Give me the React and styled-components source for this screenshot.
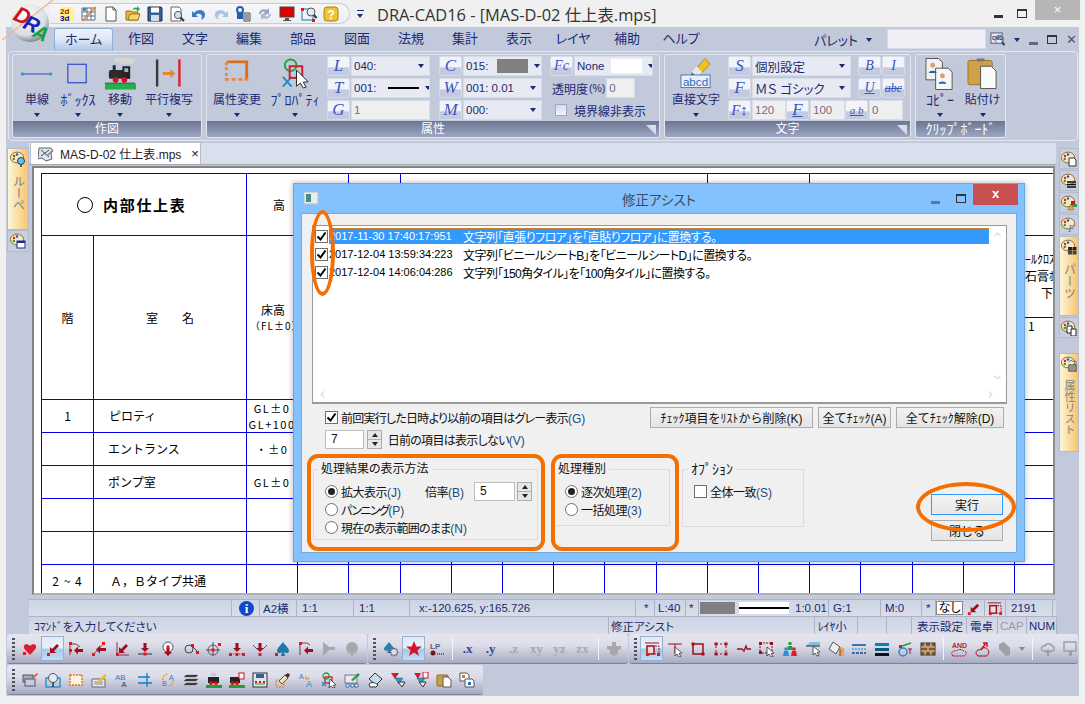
import React from "react";
import styled, { createGlobalStyle } from "styled-components";
import { ChevronLeft, ChevronRight, ChevronUp, ChevronDown } from "lucide-react";

const FONT = `"Liberation Sans", "Noto Sans CJK JP", sans-serif`;
const NAVY = "#1c2a70";
const BLUE_LINE = "#0000e8";
const ORANGE = "#f56f00";

const GlobalStyle = createGlobalStyle`
  html, body { margin: 0; padding: 0; background: #f0f0f0; }
  body { width: 1085px; height: 704px; overflow: hidden; font-family: ${FONT}; font-size: 12px; color: #111; font-feature-settings: "palt"; }
  * { box-sizing: border-box; }
`;

/* ---------- icons ---------- */

const Red = "#a10d1c";
const arrowDL = <path d="M13 3L8 8l-2-2v6h6l-2-2 5-5z" fill={Red} transform="translate(-1 0)" />;
const arrowD = <path d="M6.5 2h3v5H12l-4 4-4-4h2.5z" fill={Red} />;
const dot = (x, y, c = "#e8141e") => <rect x={x} y={y} width="3" height="3" fill={c} />;
const palette = (
  <>
    <ellipse cx="7" cy="6.5" rx="6.6" ry="5.4" fill="#f6e9bf" stroke="#8d6a36" />
    <circle cx="4" cy="5" r="1.2" fill="#e02020" />
    <circle cx="7" cy="3.5" r="1.2" fill="#2050d0" />
    <circle cx="3.8" cy="8" r="1.2" fill="#20a040" />
  </>
);

const ICONS = {
  twoD: (
    <>
      <rect x="1" y="1" width="14" height="14" fill="#fff48a" />
      <text x="1" y="7.5" fontSize="8" fontWeight="700" fill="#c80000" fontFamily="Liberation Sans">2d</text>
      <text x="1" y="15" fontSize="8" fontWeight="700" fill="#0000a0" fontFamily="Liberation Sans">3d</text>
    </>
  ),
  layout: (
    <>
      <path d="M1 2h13v12H1z" fill="#fff" stroke="#57708c" />
      <path d="M1 6h13M1 10h13M6 2v12M10 2v12" stroke="#57708c" />
      <path d="M2 2h3v3H2z" fill="#3f8f8a" />
      <path d="M1 15L15 1" stroke="#e87a20" strokeWidth="1.3" />
    </>
  ),
  newDoc: <path d="M3 1h7l3 3v11H3z M10 1v3h3" fill="#fff" stroke="#555" />,
  open: (
    <>
      <path d="M1 5h5l1 1h6v8H1z" fill="#e9b93d" stroke="#9a7416" />
      <path d="M3 14l2-6h10l-2 6z" fill="#f7d86a" stroke="#9a7416" />
      <path d="M7 4c2-3 4-3 5-2V0l3 3-3 3V4c-1-1-3-1-5 0z" fill="#3aa53a" />
    </>
  ),
  save: (
    <>
      <path d="M1 1h13l1 1v13H1z" fill="#39618f" stroke="#1c2f50" />
      <rect x="4" y="1.5" width="8" height="5" fill="#fff" />
      <rect x="4" y="9" width="8" height="6" fill="#d5dce6" />
    </>
  ),
  preview: (
    <>
      <path d="M2 1h8l2 2v12H2z" fill="#fff" stroke="#666" />
      <circle cx="9" cy="9" r="3.6" fill="#cfe4f8" stroke="#555" />
      <path d="M11.5 11.5l3.5 3.5" stroke="#333" strokeWidth="2" />
    </>
  ),
  undo: <path d="M3 7c3-4 10-4 11 1 .5 3-2 5-4 6 1-2 1.500-5-1-6-2-.7-3 0-4 1l2 2H1V5z" fill="#3a79c8" />,
  redo: <path d="M13 7c-3-4-10-4-11 1-.5 3 2 5 4 6-1-2-1.500-5 1-6 2-.7 3 0 4 1l-2 2h6V5z" fill="#a5c4e6" />,
  lockList: (
    <>
      <circle cx="5" cy="4" r="3" fill="none" stroke="#1f5fb0" strokeWidth="2" />
      <rect x="2" y="7" width="6" height="6" fill="#1f5fb0" />
      <path d="M9 7h6v8H9z" fill="#fff" stroke="#444" />
      <path d="M10 9h4M10 11h4M10 13h4" stroke="#333" />
    </>
  ),
  refresh: (
    <>
      <path d="M2 8c0-4 5-6 8-4l2-2v6H6l2-2c-2-1-4 0-4 2z" fill="#8fa5c4" />
      <path d="M14 8c0 4-5 6-8 4l-2 2V8h6l-2 2c2 1 4 0 4-2z" fill="#a9bcd6" />
    </>
  ),
  monitor: (
    <>
      <rect x="1" y="1" width="14" height="10" fill="#e00000" stroke="#444" />
      <path d="M6 12h4v2h2v1H4v-1h2z" fill="#555" />
    </>
  ),
  frameZoom: (
    <>
      <rect x="1" y="3" width="11" height="11" fill="none" stroke="#0a7fb8" />
      <circle cx="10" cy="6" r="4" fill="#d8ecfa" stroke="#555" />
      <path d="M13 9l2.500 3" stroke="#333" strokeWidth="2" />
      {dot(0, 2)}
      {dot(11, 13)}
    </>
  ),
  help: (
    <>
      <rect x="1" y="1" width="14" height="14" rx="3" fill="#f2c230" stroke="#a98214" />
      <text x="4.5" y="13" fontSize="12" fontWeight="700" fill="#fff" fontFamily="Liberation Sans">?</text>
    </>
  ),
  search: (
    <>
      <rect x="1" y="1" width="12" height="11" fill="#e8e8f4" stroke="#556" />
      <text x="2" y="8" fontSize="5" fontWeight="700" fill="#223" fontFamily="Liberation Sans">CMD</text>
      <circle cx="10" cy="8" r="4.5" fill="none" stroke="#6a8ac0" strokeWidth="1.300" />
      <path d="M13 11l2.500 3" stroke="#333" strokeWidth="2" />
    </>
  ),
  doc: (
    <>
      <path d="M1 2h12l2 3-2 2 1 6-6 2-4-3-4 1z" fill="#dde4ee" stroke="#666" />
      <path d="M3 4l8 7M3 10l8-6" stroke="#446" />
      <path d="M9 9l5-5 1 1-5 5z" fill="#888" />
    </>
  ),
  dlg: (
    <>
      <rect x="1" y="1" width="14" height="12" fill="#e8eef0" stroke="#bbb" />
      <rect x="3" y="3" width="5" height="8" fill="#3f8f8a" />
    </>
  ),
  heart: (
    <>
      <path d="M8 14L2.500 8C0 4 5 1.500 8 5c3-3.500 8-1 5.500 3z" fill="#dd1c2c" />
      {dot(1, 11)}
    </>
  ),
  snapNear: <>{arrowDL}{dot(2, 12)}</>,
  snapTrace: (
    <>
      <path d="M2 2v12M2 3h6l4 3" fill="none" stroke="#8c3040" />
      {dot(1, 1)}{dot(1, 8)}
      <path d="M15 8v3H10v2.500L6 9.500l4-4V8z" fill={Red} />
    </>
  ),
  snapDiag: (
    <>
      <path d="M2 14L13 2" stroke="#8c3040" />
      {dot(11, 1)}{dot(1, 12)}
      <path d="M15 7v3H9v2.500L5 8.500l4-4V7z" fill={Red} />
    </>
  ),
  snapCorner: (
    <>
      <path d="M3 1v13h12" fill="none" stroke="#8c3040" />
      {dot(2, 12)}
      {arrowDL}
    </>
  ),
  snapBase: (
    <>
      <path d="M1 13h14" stroke="#333" />
      {arrowD}
      {dot(6.500, 11.500)}
    </>
  ),
  snapCircle: (
    <>
      <circle cx="8" cy="6" r="5" fill="#fff" stroke="#555" />
      <path d="M6.500 7h3v4H12l-4 4-4-4h2.500z" fill={Red} />
      {dot(6.500, 4.500)}
    </>
  ),
  snapTangent: (
    <>
      <circle cx="6" cy="8" r="4" fill="none" stroke="#444" />
      <path d="M9 5l6 6" stroke="#444" />
      {dot(8, 3)}{dot(13, 10)}
    </>
  ),
  snapCross: (
    <>
      <circle cx="7" cy="9" r="5" fill="none" stroke="#555" />
      <path d="M7 1v14M0 9h14" stroke="#555" />
      {dot(12, 2)}{dot(5.500, 7.500)}
    </>
  ),
  snapThree: (
    <>
      {arrowD}
      <path d="M2 13h12" stroke="#555" strokeDasharray="1 1" />
      {dot(0, 12)}{dot(6.500, 12)}{dot(13, 12)}
    </>
  ),
  snapFan: (
    <>
      {arrowD}
      <path d="M1 4l4 4M15 4l-4 4" stroke="#555" />
      {dot(6.500, 12)}
    </>
  ),
  spade: (
    <>
      <path d="M8 1c3 4 6 6 6 9 0 2-3 3-5 1l1 4H6l1-4c-2 2-5 1-5-1 0-3 3-5 6-9z" fill="#1f7aa8" />
      {dot(0, 12)}
    </>
  ),
  snapFlag: (
    <>
      <path d="M2 14V2h7l3 2" fill="none" stroke="#8c3040" />
      {dot(1, 1)}
      <path d="M15 8v3H10v2.500L6 9.500l4-4V8z" fill={Red} />
    </>
  ),
  grayFlag: <path d="M2 1l6 5h6v3H8l-6 6z" fill="#a8a8ac" />,
  grayBall: (
    <>
      <circle cx="8" cy="7" r="6" fill="#a8a8ac" />
      <rect x="7" y="12" width="2" height="3" fill="#a8a8ac" />
    </>
  ),
  spadeGear: (
    <>
      <path d="M6 1c2 3 5 5 5 7 0 2-3 2-4 1l1 3H4l1-3C4 10 1 10 1 8c0-2 3-4 5-7z" fill="#2a7fb0" />
      <circle cx="11" cy="11" r="3.500" fill="#dde" stroke="#556" strokeWidth="1.500" strokeDasharray="1.500 .8" />
    </>
  ),
  star: <path d="M8 0l2.200 5.500H16l-4.600 3.700L13 15l-5-3.400L3 15l1.600-5.800L0 5.500h5.800z" fill="#d4132a" />,
  lp: (
    <>
      <text x="1" y="8" fontSize="8" fontWeight="700" fill="#5a5f78" fontFamily="Liberation Sans">LP</text>
      <circle cx="4" cy="12" r="2.500" fill="#7a1020" />
      <path d="M8 13h7" stroke="#667" strokeWidth="2" strokeDasharray="1 1" />
    </>
  ),
  plusGray: <path d="M6 1h4v4h5v3l-3 1v4l-4 2-4-2V9L1 8V5h5z" fill="#a8a8ac" />,
  trim: (
    <>
      <path d="M1 2h14" stroke={Red} />
      <rect x="3" y="5" width="7" height="8" fill="#f4dada" stroke={Red} strokeWidth="1.500" />
      <path d="M11 5h4v8h-4" fill="none" stroke={Red} strokeDasharray="2 1" />
      {dot(2, 12)}{dot(13, 12)}
    </>
  ),
  lineCursor: (
    <>
      <path d="M1 3h14M8 3v9" stroke={Red} />
      <path d="M8 6l7 6-3 .5 2 3-2 .5-2-3-2 2z" fill="#fff" stroke="#333" strokeWidth=".8" />
    </>
  ),
  square: (
    <>
      <rect x="3" y="3" width="10" height="10" fill="none" stroke={Red} strokeWidth="1.500" />
      {dot(1.500, 1.500, Red)}{dot(11.500, 11.500, Red)}
    </>
  ),
  dashSquare: (
    <>
      <rect x="3" y="3" width="10" height="10" fill="none" stroke={Red} strokeDasharray="2 2" />
      {dot(1.500, 1.500, Red)}{dot(11.500, 1.500, Red)}{dot(1.500, 11.500, Red)}{dot(11.500, 11.500, Red)}
    </>
  ),
  wave: <path d="M1 8h5l2 2 2-5 1 3h4" fill="none" stroke={Red} strokeWidth="1.300" />,
  dashCursor: (
    <>
      <rect x="1" y="2" width="12" height="10" fill="none" stroke={Red} strokeDasharray="2 1" />
      {dot(0, 1, Red)}{dot(11, 1, Red)}{dot(0, 10, Red)}
      <path d="M8 6l7 6-3 .5 2 3-2 .5-2-3-2 2z" fill="#fff" stroke="#333" strokeWidth=".8" />
    </>
  ),
  people: (
    <>
      <circle cx="8" cy="2.500" r="1.800" fill="#22a040" />
      <path d="M6 5h4l1 4H5z" fill="#22a040" />
      <circle cx="4" cy="8" r="1.800" fill="#2a8fd8" />
      <path d="M2 10h4l1 5H1z" fill="#2a8fd8" />
      <circle cx="12" cy="8" r="1.800" fill="#d82030" />
      <path d="M10 10h4l1 5H9z" fill="#d82030" />
    </>
  ),
  blueCursor: (
    <>
      <path d="M1 5L5 1h10v4z" fill="#7fc3e0" />
      <path d="M1 5h14" stroke="#333" />
      <path d="M8 5l7 6-3 .5 2 3-2 .5-2-3-2 2z" fill="#fff" stroke="#333" strokeWidth=".8" />
    </>
  ),
  eraser: (
    <>
      <path d="M5 1l7 5-4 7-7-5z" fill="#eee" stroke="#555" />
      <path d="M13 6v9M15 7v8" stroke="#d8a020" strokeWidth="1.500" />
      <path d="M12 8v7" stroke="#c02020" />
    </>
  ),
  dashLines: (
    <>
      <path d="M1 4h14" stroke="#0c4f9a" strokeWidth="1.500" />
      <path d="M1 8h14" stroke="#0c8fb8" strokeDasharray="2 1" />
      <path d="M1 12h14" stroke="#0c4f9a" strokeDasharray="3 1" strokeWidth="1.500" />
    </>
  ),
  thickLines: (
    <>
      <rect x="1" y="2" width="14" height="3" fill="#0a7fc0" />
      <rect x="1" y="7" width="14" height="3" fill="#0a5a8c" />
      <rect x="1" y="12" width="14" height="3" fill="#111" />
    </>
  ),
  tilted: (
    <>
      <circle cx="6" cy="11" r="4" fill="none" stroke="#1f8ad0" strokeWidth="1.500" />
      <path d="M2 6l12-4" stroke="#22a040" strokeWidth="1.500" />
      <path d="M11 8h4M13 8v5" stroke={Red} />
      {dot(2, 4)}
    </>
  ),
  hatch: (
    <>
      <rect x="1" y="2" width="14" height="12" fill="#8a5a2c" stroke="#333" />
      <path d="M1 6h14M1 10h14M5 2v4M11 2v4M8 6v4M5 10v4M11 10v4" stroke="#e0d0b0" />
    </>
  ),
  andCloud: (
    <>
      <text x="1" y="7" fontSize="7" fontWeight="700" fill="#c02030" fontFamily="Liberation Sans">AND</text>
      <path d="M2 15c-3-3 0-6 3-5 2-2 6-2 8 0 3 0 3 4 0 5z" fill="none" stroke={Red} strokeDasharray="2 1" />
    </>
  ),
  cloudArrow: (
    <>
      <path d="M4 15c-4-3-1-7 2-6 1-3 7-3 8 0 2 2 0 6-2 6z" fill="none" stroke={Red} />
      <path d="M7 9l5-7M9 2h4v4" fill="none" stroke="#d81028" strokeWidth="1.500" />
    </>
  ),
  grayPaint: <path d="M2 3l5-2 6 6v7l-4 1-7-7z" fill="#a0a0a4" />,
  grayCloud: (
    <>
      <path d="M3 10C0 8 2 4 5 5c1-3 6-3 7 0 3 0 3 5 0 5z" fill="none" stroke="#a0a0a4" strokeWidth="1.500" />
      <path d="M8 8l-3 4h2v3h2v-3h2z" fill="#a0a0a4" />
    </>
  ),
  grayBox: (
    <>
      <rect x="1" y="1" width="12" height="9" fill="none" stroke="#a0a0a4" strokeWidth="1.500" />
      <path d="M6 10h3v5H6z" fill="#a0a0a4" />
    </>
  ),
  chat: (
    <>
      <rect x="1" y="3" width="10" height="7" fill="#aab" stroke="#556" />
      <rect x="3" y="7" width="10" height="7" fill="#c8cce0" stroke="#556" />
      <path d="M11 5l4-4 1 1-4 4z" fill="#e04020" />
    </>
  ),
  zoomFrame: (
    <>
      <rect x="1" y="6" width="14" height="9" fill="none" stroke="#1a8ad0" strokeWidth="1.300" />
      <circle cx="8" cy="6" r="4.500" fill="#d8ecfa" stroke="#555" />
      <path d="M8 10.500V15" stroke="#333" strokeWidth="1.500" />
    </>
  ),
  dashRect: <rect x="2" y="3" width="12" height="10" fill="#fff3e6" stroke="#e07a20" strokeWidth="1.500" strokeDasharray="2 1" />,
  penBox: (
    <>
      <path d="M1 7h13v8H1z" fill="#e8e8ee" stroke="#667" />
      <path d="M3 10h9M3 12h9" stroke="#889" />
      <path d="M6 10l8-8 2 2-8 7z" fill="#f0c020" />
    </>
  ),
  abReplace: (
    <>
      <text x="1" y="8" fontSize="8" fill="#2a7fc0" fontFamily="Liberation Sans">AB</text>
      <text x="7" y="15" fontSize="8" fontWeight="700" fill="#667" fontFamily="Liberation Sans">A</text>
    </>
  ),
  crossLine: <path d="M1 5h12M1 11h14M10 1v14" fill="none" stroke="#0a7fc8" strokeWidth="1.300" />,
  abCycle: (
    <>
      <path d="M3 8a5 5 0 0 1 5-6M13 8a5 5 0 0 1-5 6" fill="none" stroke="#e8a030" strokeWidth="1.500" strokeDasharray="2 1" />
      <text x="9" y="8" fontSize="7" fill="#2a7fc0" fontFamily="Liberation Sans">A</text>
      <text x="2" y="14" fontSize="7" fill="#2a7fc0" fontFamily="Liberation Sans">B</text>
    </>
  ),
  layers: <path d="M3 3h12l-2 2H1zM3 7h12l-2 2H1zM3 11h12l-2 2H1z" fill="#333" stroke="#666" strokeWidth=".4" />,
  train: (
    <>
      <path d="M5 1h5v3H5z" fill="#c8c8c8" />
      <rect x="2" y="5" width="11" height="6" fill="#222" />
      <circle cx="5" cy="11" r="2" fill="#d01020" />
      <circle cx="10" cy="11" r="2" fill="#d01020" />
      <rect x="0" y="13" width="16" height="3" fill="#1fa030" />
    </>
  ),
  trainD: (
    <>
      <rect x="1" y="5" width="10" height="6" fill="#222" />
      <circle cx="3.500" cy="11" r="2" fill="#d01020" />
      <circle cx="8" cy="11" r="2" fill="#d01020" />
      <rect x="0" y="13" width="16" height="3" fill="#1fa030" />
      <rect x="10" y="1" width="5" height="6" fill="#fff" stroke="#d01020" />
    </>
  ),
  floppy: (
    <>
      <rect x="1" y="1" width="14" height="14" fill="#dfe6ee" stroke="#333" />
      <rect x="4" y="2" width="8" height="4" fill="#39618f" />
      <path d="M3 9h2v2H3zM7 9h2v2H7zM11 9h2v2h-2z" fill="#d01020" />
      <path d="M3 12h10" stroke="#1fa030" />
    </>
  ),
  brush: (
    <>
      <rect x="1" y="8" width="8" height="7" fill="none" stroke="#e07a20" strokeDasharray="2 1" />
      <path d="M4 9l6-6 3 3-6 6z" fill="#f0e0b0" stroke="#555" />
      <path d="M10 3l3-2 2 2-2 3z" fill="#333" />
    </>
  ),
  aReplace: (
    <>
      <text x="1" y="7" fontSize="7" fill="#2a7fc0" fontFamily="Liberation Sans">A</text>
      <text x="8" y="15" fontSize="9" fill="#2a7fc0" fontFamily="Liberation Sans">A</text>
      <path d="M7 3l2 3 3-1-2 3-3-1z" fill="#e8a030" />
    </>
  ),
  propCursor: (
    <>
      <circle cx="5" cy="4" r="3" fill="none" stroke="#2aa040" strokeWidth="1.300" />
      <rect x="4" y="5" width="7" height="6" fill="none" stroke="#c82030" strokeWidth="1.300" />
      <path d="M1 10l4 4M5 10l-4 4" stroke="#1f8ad0" strokeWidth="1.300" />
      <path d="M9 7l6 6-3 .5 2 2-2 .5-2-2-2 2z" fill="#fff" stroke="#333" strokeWidth=".8" />
    </>
  ),
  boxPen: (
    <>
      <rect x="1" y="3" width="12" height="8" fill="#e8e8ee" stroke="#778" />
      <path d="M7 8l7-7 2 2-7 6z" fill="#2aa040" />
      <path d="M2 12h3v3H2zM7 12h3v3H7zM11 12h3v3h-3z" fill="#fff" stroke="#1f4f9a" strokeWidth=".8" />
    </>
  ),
  inkBottle: (
    <>
      <path d="M8 1l7 6-6 6-7-6z" fill="#bfe0f0" stroke="#333" />
      <path d="M2 12c2-2 6-2 9 1l-2 2H3z" fill="#fff" stroke="#333" />
    </>
  ),
  flagSwap: (
    <>
      <path d="M1 1h8l-4 6z" fill="#d81c2c" />
      <path d="M5 6h8l-4 6z" fill="#20a0d0" stroke="#333" strokeWidth=".4" />
      <path d="M8 10h7l-3 5z" fill="#eee" stroke="#333" />
    </>
  ),
  flagSwapD: (
    <>
      <path d="M1 1h7l-3 6z" fill="#d81c2c" />
      <path d="M4 6h8l-4 6z" fill="#20a0d0" stroke="#333" strokeWidth=".4" />
      <path d="M6 10h7l-3 5z" fill="#eee" stroke="#333" />
      <rect x="10" y="0" width="5" height="6" fill="#fff" stroke="#d01020" />
    </>
  ),
  pasteDoc: (
    <>
      <rect x="1" y="3" width="11" height="11" rx="1" fill="#c9a04a" stroke="#8a6a20" />
      <path d="M7 5h5l3 3v7H7z" fill="#fff" stroke="#555" />
    </>
  ),
  copyDoc: (
    <>
      <path d="M1 1h7l2 2v6H1z" fill="#fff" stroke="#555" />
      <path d="M6 7h7l2 2v6H6z" fill="#fff" stroke="#555" />
      {dot(3, 3, "#d08020")}
      {dot(9, 10, "#1f6fc0")}
    </>
  ),
  palLoupe: (
    <>
      {palette}
      <circle cx="11" cy="10" r="3.500" fill="#5cc4f0" stroke="#335" />
      <path d="M11 13.500V16" stroke="#335" strokeWidth="1.500" />
    </>
  ),
  palWin: (
    <>
      {palette}
      <rect x="7" y="8" width="8" height="7" fill="#fff" stroke="#1a2a9a" />
      <rect x="7" y="8" width="8" height="2" fill="#1a2a9a" />
    </>
  ),
  palDoc: (
    <>
      {palette}
      <path d="M8 7h5l2 2v6H8z" fill="#fff" stroke="#333" />
    </>
  ),
  palLines: (
    <>
      {palette}
      <path d="M6 9h9M6 11.500h9M6 14h9" stroke="#111" strokeWidth="1.300" />
    </>
  ),
  palShape: (
    <>
      {palette}
      <path d="M7 15l3-6 3 6z" fill="#e8b020" stroke="#555" strokeWidth=".5" />
      <rect x="10" y="6" width="4" height="4" fill="#d01020" />
      <rect x="12" y="9" width="4" height="3" fill="#20a040" />
    </>
  ),
  palF: (
    <>
      {palette}
      <text x="7" y="15" fontSize="11" fontStyle="italic" fill="#5a78b8" fontFamily="Liberation Serif">F</text>
    </>
  ),
  palParts: (
    <>
      {palette}
      <rect x="7" y="8" width="4" height="3.500" fill="#222" />
      <rect x="11.500" y="8" width="4" height="3.500" fill="#222" />
      <rect x="7" y="12" width="4" height="3.500" fill="#444" />
      <rect x="11.500" y="12" width="4" height="3.500" fill="#444" />
    </>
  ),
  palCopy: (
    <>
      {palette}
      <path d="M6 6h5v7H6z" fill="#fff" stroke="#222" />
      <path d="M10 9h5v7h-5z" fill="#fff" stroke="#222" />
    </>
  ),
  palAttr: (
    <>
      {palette}
      <path d="M8 6l2-2 2 2M12 5h3v3" stroke="#20a0c0" fill="none" />
      <rect x="8" y="9" width="7" height="6" fill="#fff" stroke="#222" />
      <path d="M9 11h5M9 13h5" stroke="#222" />
    </>
  ),
};

const LARGE = {
  line: (
    <>
      <path d="M2 17h28" stroke="#2a50c0" strokeWidth="1.200" />
      <rect x="0" y="15.500" width="3" height="3" fill="#19a7c9" />
      <rect x="29" y="15.500" width="3" height="3" fill="#19a7c9" />
    </>
  ),
  box: <rect x="6" y="7" width="19" height="19" fill="none" stroke="#3a4fd0" strokeWidth="1.300" />,
  move: (
    <>
      <path d="M10 1c5-2 16-1 22 1 0 4-3 5-8 4-4 2-8 1-9-1-3 0-5-1-5-4z" fill="#d6d6d6" />
      <rect x="9" y="8" width="3" height="6" fill="#222" />
      <rect x="5" y="13" width="17" height="9" rx="2" fill="#2b2b2b" />
      <rect x="19" y="9" width="8" height="13" fill="#222" />
      <rect x="21" y="11" width="4" height="4" fill="#9fb0c0" />
      <circle cx="12" cy="23" r="3" fill="#d80f20" />
      <circle cx="21" cy="23" r="3" fill="#d80f20" />
      <rect x="1" y="26" width="31" height="1" fill="#5a1418" />
      <rect x="1" y="27" width="32" height="6" fill="#1fb14a" />
    </>
  ),
  parallel: (
    <>
      <rect x="3" y="2" width="2.500" height="28" fill="#3a3a3a" />
      <rect x="26" y="2" width="2.500" height="28" fill="#e0202a" />
      <path d="M10 15h8v-3l5 4.500-5 4.500v-3h-8z" fill="#e8862c" />
    </>
  ),
  attr: (
    <>
      <path d="M6 3h22v20h-3V6H6z" fill="#d96f1c" />
      <path d="M4 5h3v3H4zM4 10h3v3H4zM4 16h3v3H4zM4 21h4v3H4zM11 21h4v3h-4zM18 21h4v3h-4zM24 21h4v3h-4z" fill="#e98a33" />
    </>
  ),
  property: (
    <>
      <circle cx="12" cy="8" r="6" fill="none" stroke="#2aa040" strokeWidth="2" />
      <path d="M4 20l9 10M13 20l-9 10" stroke="#1f8ad0" strokeWidth="2" />
      <rect x="11" y="9" width="13" height="12" fill="none" stroke="#c82030" strokeWidth="2" />
      <path d="M18 13l12 12-5 .5 3 5-3 1-3-5-4 3z" fill="#fff" stroke="#222" />
    </>
  ),
  direct: (
    <>
      <path d="M12 16L26 1l5 6-13 13z" fill="#f0c020" stroke="#b08a10" />
      <path d="M12 16l6 4-6 3z" fill="#222" />
      <path d="M12 15l5-6 6 6-5 5z" fill="#e8e8e8" />
      <rect x="1" y="18" width="30" height="13" fill="#eaf0fa" stroke="#4a78b8" />
      <text x="3" y="29" fontSize="12" fill="#2a6ab8" fontFamily="Liberation Sans">abcd</text>
    </>
  ),
  copy: (
    <>
      <path d="M2 1h13l4 4v18H2z" fill="#f2f2f2" stroke="#555" />
      <path d="M12 11h13l4 4v18H12z" fill="#f7f7f7" stroke="#555" />
      <circle cx="9" cy="8" r="2.500" fill="#d8a070" />
      <path d="M5 16c0-3 8-3 8 0z" fill="#1f5fb0" />
      <circle cx="19" cy="19" r="2.500" fill="#d8a070" />
      <path d="M15 27c0-3 8-3 8 0z" fill="#1f5fb0" />
    </>
  ),
  paste: (
    <>
      <rect x="1" y="3" width="25" height="25" rx="2" fill="#cfa24a" stroke="#9a7624" />
      <rect x="10" y="1" width="8" height="3" fill="#777" />
      <path d="M14 9h11l5 5v18H14z" fill="#fafafa" stroke="#555" />
    </>
  ),
};

const SvgFrame = styled.svg`
  display: block;
  flex: none;
`;

function Icon({ name, size = 16 }) {
  return (
    <SvgFrame width={size} height={size} viewBox="0 0 16 16">
      {ICONS[name]}
    </SvgFrame>
  );
}

function BigIcon({ name }) {
  return (
    <SvgFrame width="32" height="34" viewBox="0 0 33 34">
      {LARGE[name]}
    </SvgFrame>
  );
}

function Logo() {
  return (
    <LogoMark width="56" height="46" viewBox="0 0 56 46">
      <defs>
        <radialGradient id="logoBall" cx="40%" cy="30%" r="75%">
          <stop offset="0%" stopColor="#ffffff" />
          <stop offset="70%" stopColor="#d8dbe2" />
          <stop offset="100%" stopColor="#70747e" />
        </radialGradient>
      </defs>
      <circle cx="29" cy="23" r="19" fill="url(#logoBall)" />
      <path d="M1 40L52 0" stroke="#efb79a" strokeWidth="1.500" />
      <text x="13" y="22" fontSize="22" fontWeight="700" fontStyle="italic" fill="#d0121b" fontFamily="Liberation Sans" transform="rotate(25 18 16)">D</text>
      <text x="23" y="31" fontSize="21" fontWeight="700" fontStyle="italic" fill="#1424b8" fontFamily="Liberation Sans" transform="rotate(25 30 24)">R</text>
      <text x="33" y="39" fontSize="20" fontWeight="700" fontStyle="italic" fill="#0fa33a" fontFamily="Liberation Sans" transform="rotate(25 38 32)">A</text>
    </LogoMark>
  );
}

/* ---------- frame ---------- */

const Screen = styled.div`
  position: relative;
  width: 1085px;
  height: 704px;
  overflow: hidden;
  background: #f0f0f0;
  display: flex;
  flex-direction: column;
`;

const LogoMark = styled.svg`
  position: absolute;
  left: 1px;
  top: 0;
  z-index: 3;
`;

const TitleBar = styled.div`
  height: 27px;
  display: flex;
  align-items: center;
  padding-left: 50px;
  flex: none;
`;

const QuickBar = styled.div`
  width: 300px;
  height: 21px;
  border: 1px solid #c8ccd6;
  border-left: none;
  border-radius: 0 11px 11px 0;
  background: linear-gradient(#f7f7f9, #eceef3);
  display: flex;
  align-items: center;
  padding-left: 9px;
  gap: 6px;
`;

const QuickArrow = styled.span`
  width: 7px;
  height: 8px;
  margin-left: 7px;
  border-top: 1px solid ${NAVY};
  position: relative;
  &::after {
    content: "";
    position: absolute;
    top: 3px;
    left: 0;
    border: 3.5px solid transparent;
    border-top: 4px solid ${NAVY};
  }
`;

const WindowTitle = styled.div`
  margin-left: 13px;
  font-family: "Open Sans", "Noto Sans CJK JP", sans-serif;
  font-size: 16.4px;
  color: #333;
  flex: 1;
  white-space: nowrap;
`;

const WinGlyph = styled.span`
  width: ${(p) => p.$w}px;
  display: flex;
  justify-content: center;
  align-items: center;
`;

const MinBar = styled.span`
  width: 9px;
  height: 3px;
  flex: none;
  background: ${(p) => p.$c || "#333"};
  margin-top: ${(p) => p.$top ?? 6}px;
`;

const MaxBox = styled.span`
  width: 10px;
  height: 9px;
  flex: none;
  border: 1px solid #333;
  border-top-width: 2px;
`;

const WinClose = styled.div`
  width: 45px;
  height: 20px;
  margin: 0 5px 7px 1px;
  background: #b6b6b6;
  color: #fff;
  text-align: center;
  font-size: 13px;
  line-height: 20px;
`;

const Shell = styled.div`
  flex: 1;
  margin: 0 6px 8px;
  background: #c2c9db;
  display: flex;
  flex-direction: column;
  min-height: 0;
`;

const TabStrip = styled.div`
  height: 24px;
  flex: none;
  display: flex;
  align-items: flex-end;
  padding-left: 48px;
`;

const RibbonTab = styled.div`
  width: ${(p) => (p.$active ? 59 : 54)}px;
  margin-right: ${(p) => (p.$active ? 1 : 0)}px;
  height: 23px;
  font-size: 13px;
  line-height: 22px;
  text-align: center;
  color: ${NAVY};
  ${(p) =>
    p.$active &&
    `
    background: linear-gradient(#eef3fb, #dbe5f4 50%, #aac6e6);
    border: 1px solid #8fb0d6;
    border-bottom: none;
    border-radius: 3px 3px 0 0;
  `}
`;

const PaletteMenu = styled.div`
  margin-left: auto;
  width: 61px;
  display: flex;
  align-items: center;
  justify-content: flex-end;
  gap: 8px;
  height: 23px;
  font-size: 13px;
  color: ${NAVY};
  white-space: nowrap;
`;

const TabSearch = styled.div`
  width: 99px;
  height: 20px;
  margin: 0 4px 2px 15px;
  background: #eef0f5;
  border: 1px solid #d6dae6;
`;

const CornerGroup = styled.div`
  width: 89px;
  height: 23px;
  display: flex;
  align-items: center;
  gap: 9px;
  color: #556;
  flex: none;
  font-size: 13px;
`;

const Arrow = styled.span`
  display: inline-block;
  flex: none;
  width: 0;
  height: 0;
  border-left: 3.5px solid transparent;
  border-right: 3.5px solid transparent;
  border-top: 4px solid ${(p) => p.$c || NAVY};
`;

const RibbonPanel = styled.div`
  height: 90px;
  flex: none;
  margin: 0 1px 0 2px;
  border: 1px solid #e3e6ef;
  border-radius: 4px;
  padding: 2px 3px;
  display: flex;
  gap: 4px;
`;

const Group = styled.div`
  width: ${(p) => p.$w}px;
  display: flex;
  flex-direction: column;
  border: 1px solid #e3e6ef;
  border-radius: 3px;
  overflow: hidden;
`;

const GroupBody = styled.div`
  flex: 1;
  display: flex;
  min-height: 0;
`;

const GroupFoot = styled.div`
  height: 16px;
  flex: none;
  position: relative;
  background: linear-gradient(#6c7691, #9ea7c2);
  color: #fff;
  text-align: center;
  font-size: ${(p) => p.$fs || 12}px;
  line-height: 16px;
  white-space: nowrap;
  &[data-launcher]::after {
    content: "";
    position: absolute;
    right: 3px;
    bottom: 2px;
    width: 0;
    height: 0;
    border-top: 10px solid #d8dcea;
    border-left: 10px solid transparent;
  }
`;

const LargeButton = styled.div`
  width: ${(p) => p.$w}px;
  flex: none;
  display: flex;
  flex-direction: column;
  align-items: center;
  padding-top: 2px;
  color: ${NAVY};
  font-size: ${(p) => p.$fs || 12}px;
`;

const LargeLabel = styled.div`
  height: 14px;
  line-height: 14px;
  margin: 2px 0 6px;
  white-space: nowrap;
`;

const AttrGrid = styled.div`
  display: flex;
  flex-direction: column;
  gap: 2px;
  margin-left: ${(p) => p.$ml || 0}px;
  padding-top: 1px;
`;

const AttrRow = styled.div`
  display: flex;
  height: 20px;
`;

const KeyButton = styled.div`
  width: ${(p) => p.$w || 23}px;
  margin-left: ${(p) => p.$ml || 0}px;
  margin-right: 1px;
  flex: none;
  background: linear-gradient(#f2f4f9 55%, #c4cbe0 60%);
  border: 1px solid #d8dce8;
  border-radius: 2px;
  font-family: "Liberation Serif", serif;
  font-style: italic;
  font-size: ${(p) => p.$fs || 17}px;
  line-height: 18px;
  text-align: center;
  color: #3a55c4;
  white-space: nowrap;
  text-decoration: ${(p) => p.$deco || "none"};
`;

const Field = styled.div`
  width: ${(p) => p.$w}px;
  flex: none;
  background: ${(p) => (p.$disabled ? "#efefef" : "#e7eaf3")};
  border: 1px solid #d8dce8;
  font-size: ${(p) => p.$fs || 11.5}px;
  color: ${(p) => (p.$disabled ? "#7a6a8a" : NAVY)};
  display: flex;
  align-items: center;
  padding: 0 5px 0 2px;
  gap: 6px;
  white-space: nowrap;
  overflow: hidden;
`;

const FieldFill = styled.span`
  margin-left: auto;
  display: flex;
  align-items: center;
`;

const Swatch = styled.span`
  width: ${(p) => p.$w}px;
  height: 14px;
  margin-left: ${(p) => p.$ml || 0}px;
  background: ${(p) => p.$c};
  flex: none;
`;

const LineSample = styled.span`
  width: 31px;
  height: 2px;
  background: #000;
  margin-left: 6px;
  flex: none;
`;

const Alpha = styled.div`
  display: flex;
  align-items: center;
  height: 20px;
  font-size: 12px;
  color: ${NAVY};
  gap: 1px;
  padding-left: 2px;
  white-space: nowrap;
`;

const AlphaUnit = styled.span`
  font-size: 10.5px;
`;

const AlphaValue = styled.div`
  width: 29px;
  height: 20px;
  background: #efefef;
  border: 1px solid #d8dce8;
  color: #7a6a8a;
  padding-left: 2px;
  line-height: 18px;
  font-size: 11.5px;
`;

const RibbonCheck = styled.span`
  width: 12px;
  height: 12px;
  margin: 0 6px 0 3px;
  background: linear-gradient(#d8dcea, #f2f4f9);
  border: 1px solid #9ea6c0;
  flex: none;
`;

/* ---------- workspace ---------- */

const Workspace = styled.div`
  flex: 1;
  min-height: 0;
  display: flex;
  padding-top: 2px;
`;

const Dock = styled.div`
  width: ${(p) => p.$w}px;
  flex: none;
  display: flex;
  flex-direction: column;
  padding: ${(p) => p.$pad};
  gap: ${(p) => p.$gap || 0}px;
`;

const DockTab = styled.div`
  height: ${(p) => p.$h}px;
  margin-top: ${(p) => p.$mt || 0}px;
  flex: none;
  display: flex;
  flex-direction: column;
  align-items: center;
  padding-top: 2px;
  border: 1px solid #b4bbcd;
  background: ${(p) => (p.$open ? "linear-gradient(90deg, #fdf6da, #f6c56f)" : "#c7cede")};
  overflow: hidden;
`;

const DockText = styled.div`
  writing-mode: vertical-rl;
  font-size: ${(p) => p.$fs || 12}px;
  color: #808080;
  margin-top: 8px;
  white-space: nowrap;
`;

const DocColumn = styled.div`
  flex: 1;
  min-width: 0;
  display: flex;
  flex-direction: column;
`;

const DocTabs = styled.div`
  height: 22px;
  flex: none;
  background: #d9dfec;
  display: flex;
  padding-left: 1px;
  align-items: flex-end;
  border-bottom: 1px solid #a5a9b5;
`;

const DocTab = styled.div`
  width: 171px;
  height: 22px;
  background: #fff;
  border: 1px solid #b8bcc8;
  border-bottom: none;
  display: flex;
  align-items: center;
  padding-left: 7px;
  gap: 6px;
  font-size: 12px;
  color: #222;
  white-space: nowrap;
`;

const DocClose = styled.span`
  margin-left: 4px;
  font-size: 13px;
`;

const Canvas = styled.div`
  flex: 1;
  min-height: 0;
  margin: 1px 0 4px 3px;
  width: 1023px;
  border: 2px solid #838383;
  border-right-color: #8b8b8b;
  border-bottom-color: #b0b0b0;
  background: #fff;
  padding: 5px 0 0 7px;
  overflow: hidden;
`;

const Sheet = styled.table`
  table-layout: fixed;
  border-collapse: collapse;
  width: 1076px;
  font-family: "Noto Sans CJK JP", sans-serif;
  font-size: 12px;
  color: #000;
  font-feature-settings: normal;
`;

const SheetRow = styled.tr`
  height: ${(p) => p.$h}px;
`;

const Cell = styled.td`
  border: 1px solid ${BLUE_LINE};
  padding: 0 0 0 ${(p) => p.$pl || 0}px;
  text-align: ${(p) => p.$align || "center"};
  white-space: nowrap;
  overflow: ${(p) => p.$clip || "hidden"};
  line-height: 16px;
  font-size: ${(p) => p.$fs || 12}px;
  letter-spacing: ${(p) => p.$ls || 0}px;
  vertical-align: ${(p) => p.$va || "middle"};
`;

const SheetTitle = styled.div`
  display: flex;
  align-items: center;
  padding-left: 35px;
  gap: 10px;
  font-weight: 700;
  font-size: 15px;
  letter-spacing: 1.7px;
`;

const Ring = styled.span`
  width: 16px;
  height: 16px;
  border: 1px solid #000;
  border-radius: 50%;
`;

const NoteLine = styled.div`
  margin: ${(p) => p.$top || 0}px 0 0 ${(p) => p.$shift}px;
  height: 17px;
  line-height: 17px;
`;

const SubLine = styled.div`
  font-size: ${(p) => p.$fs || 12}px;
  letter-spacing: ${(p) => p.$ls || 0}px;
  margin-left: ${(p) => p.$ml || 0}px;
`;

const BarRow = styled.div`
  height: ${(p) => p.$h}px;
  flex: none;
  display: flex;
  background: linear-gradient(#cdd3e3, #d9dee9);
  border-top: ${(p) => (p.$top ? "1px solid #aeb4c6" : "none")};
  color: ${NAVY};
  font-size: 11.5px;
`;

const BarCell = styled.div`
  width: ${(p) => p.$w}px;
  flex: none;
  display: flex;
  align-items: center;
  justify-content: ${(p) => p.$justify || "flex-start"};
  padding-left: ${(p) => p.$pl ?? 2}px;
  border-right: 1px solid #aeb4c6;
  white-space: nowrap;
  overflow: hidden;
  color: ${(p) => p.$c || "inherit"};
`;

const InfoDot = styled.span`
  width: 15px;
  height: 15px;
  border-radius: 50%;
  background: #1048c8;
  color: #fff;
  font-family: "Liberation Serif", serif;
  font-weight: 700;
  font-size: 13px;
  line-height: 15px;
  text-align: center;
`;

const ColorBox = styled.div`
  width: ${(p) => p.$w}px;
  flex: none;
  margin: 1px ${(p) => p.$mr || 0}px 1px 0;
  background: ${(p) => p.$bg};
  border: 1px solid #d8dce8;
  display: flex;
  align-items: center;
`;

const FullLine = styled.span`
  width: 100%;
  height: 2px;
  background: #000;
`;

const WhiteChip = styled.div`
  width: 27px;
  flex: none;
  margin: 1px 0;
  background: #fff;
  border: 1px solid #888;
  color: #000;
  text-align: center;
  line-height: 13px;
  font-size: 12px;
`;

/* ---------- toolbars ---------- */

const ToolRows = styled.div`
  height: 62px;
  flex: none;
  display: flex;
  flex-direction: column;
  gap: 1px;
  padding-left: 1px;
`;

const ToolRow = styled.div`
  display: flex;
  gap: ${(p) => p.$gap || 0}px;
  height: 30px;
`;

const Toolbar = styled.div`
  width: ${(p) => p.$w}px;
  flex: none;
  display: flex;
  align-items: center;
  padding-left: 5px;
  background: linear-gradient(#e6e6f0, #dcdde9 40%, #a8aac2);
  border-bottom: 1px solid #7c7f9c;
  border-radius: 3px;
  overflow: hidden;
`;

const Grip = styled.span`
  width: 3px;
  height: 22px;
  margin-right: 3px;
  flex: none;
  background: repeating-linear-gradient(#505060 0 2px, transparent 2px 4px);
`;

const ToolButton = styled.div`
  width: 23px;
  height: 25px;
  flex: none;
  display: flex;
  align-items: center;
  justify-content: center;
  ${(p) =>
    p.$active &&
    `
    background: linear-gradient(#dfeaf8, #e8f0fa 45%, #a6c8ec 55%, #c4dcf4);
    border: 1px solid #9ab0cc;
  `}
`;

const ToolSep = styled.span`
  width: 1px;
  height: 22px;
  margin: 0 3px 0 4px;
  flex: none;
  background: #f4f4f8;
`;

const ToolText = styled.span`
  font-family: "Liberation Serif", serif;
  font-weight: 700;
  font-size: 13px;
  color: ${(p) => p.$c || "#3a4690"};
`;

const ToolDrop = styled.span`
  width: 12px;
  flex: none;
  display: flex;
  justify-content: center;
`;

/* ---------- assist dialog ---------- */

const Dialog = styled.div`
  position: absolute;
  left: 293px;
  top: 183px;
  width: 732px;
  height: 379px;
  background: #84c2ff;
  border: 1px solid #6ea6de;
  box-shadow: 0 0 6px rgba(0, 0, 0, 0.3);
  display: flex;
  flex-direction: column;
  z-index: 2;
  font-family: ${FONT};
`;

const DialogHead = styled.div`
  height: 29px;
  flex: none;
  display: flex;
  padding-left: 9px;
  position: relative;
`;

const DialogIcon = styled.span`
  margin-top: 7px;
`;

const DialogTitle = styled.div`
  position: absolute;
  left: 0;
  right: 0;
  top: 5px;
  text-align: center;
  font-size: 13.5px;
  color: #3c4a5a;
`;

const DialogControls = styled.div`
  margin-left: auto;
  display: flex;
  margin-right: 6px;
  position: relative;
`;

const DialogClose = styled.div`
  width: 45px;
  height: 21px;
  background: #c75050;
  color: #fff;
  text-align: center;
  font-size: 13px;
  line-height: 20px;
  font-weight: 700;
`;

const DialogBody = styled.div`
  position: relative;
  flex: 1;
  margin: 0 7px 8px;
  background: #f0f0f0;
  border: 1px solid #7aa9d8;
  padding: 11px 10px 0;
  color: #111;
  display: flex;
  flex-direction: column;
`;

const ListBox = styled.div`
  width: 695px;
  height: 179px;
  flex: none;
  background: #fff;
  border: 1px solid #9a9a9a;
  border-bottom-width: 2px;
  display: flex;
  flex-direction: column;
`;

const ListMain = styled.div`
  flex: 1;
  display: flex;
  min-height: 0;
`;

const ListItems = styled.div`
  flex: 1;
  padding: 1px 0 0 2px;
`;

const ListRow = styled.div`
  height: 18px;
  display: flex;
  align-items: center;
`;

const RowText = styled.div`
  flex: 1;
  height: 16px;
  margin-left: 1px;
  display: flex;
  align-items: center;
  gap: 8px;
  white-space: nowrap;
  color: ${(p) => (p.$on ? "#fff" : "#000")};
  background: ${(p) => (p.$on ? "#3399ff" : "transparent")};
  outline: ${(p) => (p.$on ? "1px dotted #d08020" : "none")};
  outline-offset: -1px;
`;

const Stamp = styled.span`
  font-size: 11px;
  width: 126px;
`;

const Message = styled.span`
  letter-spacing: -0.55px;
`;

const VScroll = styled.div`
  width: 17px;
  flex: none;
  display: flex;
  flex-direction: column;
  justify-content: space-between;
  align-items: center;
  padding: 3px 0;
  color: #b4b4b4;
`;

const HScroll = styled.div`
  height: 16px;
  flex: none;
  display: flex;
  justify-content: space-between;
  align-items: center;
  padding: 0 10px 0 4px;
  color: #b4b4b4;
`;

const OptionRow = styled.div`
  display: flex;
  height: 21px;
  margin-top: 3px;
  flex: none;
`;

const CheckLabel = styled.label`
  display: flex;
  align-items: center;
  gap: 3px;
  margin-left: ${(p) => p.$ml || 0}px;
  height: ${(p) => p.$h || 18}px;
  white-space: nowrap;
  letter-spacing: -0.75px;
`;

const Accel = styled.span`
  color: #234a7d;
  letter-spacing: 0;
`;

const CheckBox = styled.span`
  width: 13px;
  height: 13px;
  flex: none;
  background: #fff;
  border: 1px solid #707070;
  display: flex;
  align-items: center;
  justify-content: center;
`;

const DialogButtons = styled.div`
  margin-left: auto;
  display: flex;
  gap: 5px;
  margin-right: 2px;
`;

const PushButton = styled.button`
  width: ${(p) => p.$w}px;
  height: 21px;
  flex: none;
  padding: 0;
  font-family: ${FONT};
  font-size: 12px;
  color: #111;
  background: ${(p) => (p.$default ? "linear-gradient(#f4f4f4, #e6e6e6)" : "linear-gradient(#f2f2f2, #e4e4e4)")};
  border: 1px solid ${(p) => (p.$default ? "#3399ff" : "#adadad")};
  white-space: nowrap;
`;

const SpinRow = styled.div`
  display: flex;
  align-items: center;
  gap: 3px;
  margin: 2px 0 0 13px;
  height: 19px;
  flex: none;
  white-space: nowrap;
`;

const SpinNote = styled.span`
  letter-spacing: -0.7px;
`;

const SpinInput = styled.div`
  width: ${(p) => p.$w}px;
  height: 19px;
  background: #fff;
  border: 1px solid #bdbdbd;
  padding-left: 5px;
  line-height: 17px;
`;

const SpinButtons = styled.div`
  width: 15px;
  height: 19px;
  flex: none;
  display: flex;
  flex-direction: column;
  border: 1px solid #adadad;
  background: #e6e6e6;
`;

const SpinHalf = styled.div`
  flex: 1;
  display: flex;
  align-items: center;
  justify-content: center;
  &:first-child {
    border-bottom: 1px solid #adadad;
  }
`;

const UpArrow = styled.span`
  border-left: 3px solid transparent;
  border-right: 3px solid transparent;
  border-bottom: 4px solid #222;
`;

const DownArrow = styled.span`
  border-left: 3px solid transparent;
  border-right: 3px solid transparent;
  border-top: 4px solid #222;
`;

const LowerArea = styled.div`
  display: flex;
  margin: 13px 2px 0 1px;
`;

const GroupBox = styled.fieldset`
  width: ${(p) => p.$w}px;
  height: ${(p) => p.$h}px;
  margin: 0 ${(p) => p.$mr || 0}px 0 0;
  padding: 6px 0 0 11px;
  border: 1px solid #dcdcdc;
  flex: none;
  min-width: 0;
`;

const GroupLegend = styled.legend`
  margin-left: ${(p) => p.$ml}px;
  padding: 0 3px;
  font-size: ${(p) => p.$fs || 12}px;
  line-height: 14px;
`;

const OptionLine = styled.div`
  height: 18px;
  display: flex;
  align-items: center;
  gap: 3px;
  white-space: nowrap;
  letter-spacing: ${(p) => p.$ls ?? -0.5}px;
`;

const RadioDot = styled.span`
  width: 13px;
  height: 13px;
  flex: none;
  border: 1px solid #707070;
  border-radius: 50%;
  background: #fff;
  display: flex;
  align-items: center;
  justify-content: center;
  &::after {
    content: "";
    width: 7px;
    height: 7px;
    border-radius: 50%;
    background: ${(p) => (p.$on ? "#222" : "transparent")};
  }
`;

const Rate = styled.span`
  margin: 0 7px 0 21px;
`;

const MiniSpin = styled.div`
  display: flex;
  gap: 2px;
  align-items: center;
`;

const Actions = styled.div`
  margin-left: auto;
  padding-top: 32px;
  display: flex;
  flex-direction: column;
  gap: 5px;
  margin-right: 1px;
`;

const Annotation = styled.div`
  position: absolute;
  left: ${(p) => p.$x}px;
  top: ${(p) => p.$y}px;
  width: ${(p) => p.$w}px;
  height: ${(p) => p.$h}px;
  border: 4px solid ${ORANGE};
  border-radius: ${(p) => p.$r};
  pointer-events: none;
  z-index: 2;
`;

/* ---------- data ---------- */

const QUICK = ["twoD", "layout", "newDoc", "open", "save", "preview", "undo", "redo", "lockList", "refresh", "monitor", "frameZoom", "help"];
const TABS = ["作図", "文字", "編集", "部品", "図面", "法規", "集計", "表示", "レイヤ", "補助", "ヘルプ"];

const LIST_ROWS = [
  { stamp: "2017-11-30 17:40:17:951", text: "文字列「直張りフロア」を「直貼りフロア」に置換する。", on: true },
  { stamp: "2017-12-04 13:59:34:223", text: "文字列「ビニールシートB」を「ビニールシートD」に置換する。" },
  { stamp: "2017-12-04 14:06:04:286", text: "文字列「150角タイル」を「100角タイル」に置換する。" },
];

const BAR_ONE = ["heart", "snapNear", "snapTrace", "snapDiag", "snapCorner", "snapBase", "snapCircle", "snapTangent", "snapCross", "snapThree", "snapFan", "spade", "snapFlag", "grayFlag", "grayBall"];
const BAR_ROW_TWO = ["chat", "zoomFrame", "dashRect", "penBox", "abReplace", "crossLine", "abCycle", "layers", "train", "trainD", "floppy", "brush", "aReplace", "propCursor", "boxPen", "inkBottle", "flagSwap", "flagSwapD", "pasteDoc", "copyDoc"];
const BAR_THREE = ["trim", "lineCursor", "square", "dashSquare", "wave", "dashCursor", "people", "blueCursor", "eraser", "dashLines", "thickLines", "tilted", "hatch"];

const GRID_COLS = Array.from({ length: 17 }, (_, i) => i);

function Spinner() {
  return (
    <SpinButtons>
      <SpinHalf><UpArrow /></SpinHalf>
      <SpinHalf><DownArrow /></SpinHalf>
    </SpinButtons>
  );
}

function Tick({ on }) {
  return (
    <CheckBox>
      {on && (
        <svg width="11" height="11" viewBox="0 0 11 11">
          <path d="M1.5 5.5l3 3 5-7" fill="none" stroke="#000" strokeWidth="2" />
        </svg>
      )}
    </CheckBox>
  );
}

function BigButton({ w, icon, label, fs }) {
  return (
    <LargeButton $w={w} $fs={fs}>
      <BigIcon name={icon} />
      <LargeLabel>{label}</LargeLabel>
      <Arrow />
    </LargeButton>
  );
}

function Select({ w, children, fs }) {
  return (
    <Field $w={w} $fs={fs}>
      {children}
      <FieldFill><Arrow /></FieldFill>
    </Field>
  );
}

function AssistDialog() {
  return (
    <Dialog>
      <DialogHead>
        <DialogIcon><Icon name="dlg" /></DialogIcon>
        <DialogTitle>修正アシスト</DialogTitle>
        <DialogControls>
          <WinGlyph $w={28}><MinBar $c="#5a7794" $top={8} /></WinGlyph>
          <WinGlyph $w={24}><MaxBox /></WinGlyph>
          <DialogClose>x</DialogClose>
        </DialogControls>
      </DialogHead>
      <DialogBody>
        <ListBox>
          <ListMain>
            <ListItems>
              {LIST_ROWS.map((row) => (
                <ListRow key={row.stamp}>
                  <Tick on />
                  <RowText $on={row.on}>
                    <Stamp>{row.stamp}</Stamp>
                    <Message>{row.text}</Message>
                  </RowText>
                </ListRow>
              ))}
            </ListItems>
            <VScroll>
              <ChevronUp size={11} />
              <ChevronDown size={11} />
            </VScroll>
          </ListMain>
          <HScroll>
            <ChevronLeft size={11} />
            <ChevronRight size={11} />
          </HScroll>
        </ListBox>

        <OptionRow>
          <CheckLabel $ml={13} $h={21}>
            <Tick on />
            <span>前回実行した日時より以前の項目はグレー表示<Accel>(G)</Accel></span>
          </CheckLabel>
          <DialogButtons>
            <PushButton $w={163}>ﾁｪｯｸ項目をﾘｽﾄから削除(K)</PushButton>
            <PushButton $w={73}>全てﾁｪｯｸ(A)</PushButton>
            <PushButton $w={108}>全てﾁｪｯｸ解除(D)</PushButton>
          </DialogButtons>
        </OptionRow>

        <SpinRow>
          <SpinInput $w={39}>7</SpinInput>
          <Spinner />
          <SpinNote>&nbsp;日前の項目は表示しない<Accel>(V)</Accel></SpinNote>
        </SpinRow>

        <LowerArea>
          <GroupBox $w={225} $h={78} $mr={15}>
            <GroupLegend $ml={-7}>処理結果の表示方法</GroupLegend>
            <OptionLine>
              <RadioDot $on />
              <span>拡大表示<Accel>(J)</Accel></span>
              <Rate>倍率<Accel>(B)</Accel></Rate>
              <MiniSpin>
                <SpinInput $w={41}>5</SpinInput>
                <Spinner />
              </MiniSpin>
            </OptionLine>
            <OptionLine $ls={-1.6}>
              <RadioDot />
              <span>パンニング<Accel>(P)</Accel></span>
            </OptionLine>
            <OptionLine $ls={-0.8}>
              <RadioDot />
              <span>現在の表示範囲のまま<Accel>(N)</Accel></span>
            </OptionLine>
          </GroupBox>
          <GroupBox $w={117} $h={64} $mr={12}>
            <GroupLegend $ml={-10}>処理種別</GroupLegend>
            <OptionLine>
              <RadioDot $on />
              <span>逐次処理<Accel>(2)</Accel></span>
            </OptionLine>
            <OptionLine>
              <RadioDot />
              <span>一括処理<Accel>(3)</Accel></span>
            </OptionLine>
          </GroupBox>
          <GroupBox $w={122} $h={65}>
            <GroupLegend $ml={-6} $fs={14}>ｵﾌﾟｼｮﾝ</GroupLegend>
            <OptionLine>
              <Tick />
              <span>全体一致<Accel>(S)</Accel></span>
            </OptionLine>
          </GroupBox>
          <Actions>
            <PushButton $w={72} $default>実行</PushButton>
            <PushButton $w={72}>閉じる</PushButton>
          </Actions>
        </LowerArea>

        <Annotation $x={8} $y={-4} $w={25} $h={86} $r="50%" />
        <Annotation $x={5} $y={240} $w={238} $h={97} $r="11px" />
        <Annotation $x={249} $y={240} $w={128} $h={97} $r="11px" />
        <Annotation $x={614} $y={268} $w={100} $h={50} $r="50%" />
      </DialogBody>
    </Dialog>
  );
}

function DrawingSheet() {
  const emptyCols = (n) => GRID_COLS.slice(0, n).map((i) => <Cell key={i} />);
  return (
    <Sheet>
      <colgroup>
        <col width="52" />
        <col width="153" />
        {GRID_COLS.map((i) => <col key={i} width="51.2" />)}
      </colgroup>
      <tbody>
        <SheetRow $h={62}>
          <Cell colSpan={2}>
            <SheetTitle><Ring /><span>内部仕上表</span></SheetTitle>
          </Cell>
          <Cell colSpan={2} $align="left" $pl={26}>高</Cell>
          <Cell />
          <Cell colSpan={6} />
          <Cell colSpan={2} />
          <Cell colSpan={6} />
        </SheetRow>
        <SheetRow $h={82}>
          <Cell rowSpan={2}>階</Cell>
          <Cell rowSpan={2}>室　　名</Cell>
          <Cell rowSpan={2} colSpan={2} $align="left" $pl={14}>
            <SubLine>床高</SubLine>
            <SubLine $fs={10} $ls={1} $ml={-11}>（FL±0）</SubLine>
          </Cell>
          <Cell colSpan={13} />
          <Cell colSpan={2} $align="left" $clip="visible" $va="top">
            <NoteLine $shift={-8} $top={14}>ﾋﾞﾆｰﾙｸﾛｽ</NoteLine>
            <NoteLine $shift={10}>石膏ﾎﾞｰﾄﾞ</NoteLine>
            <NoteLine $shift={26}>下地</NoteLine>
          </Cell>
        </SheetRow>
        <SheetRow $h={82}>
          <Cell colSpan={13} />
          <Cell colSpan={2} $align="left" $pl={13} $va="top">1</Cell>
        </SheetRow>
        <SheetRow $h={33}>
          <Cell>1</Cell>
          <Cell $align="left" $pl={15}>ピロティ</Cell>
          <Cell $fs={11} $ls={1.5}>
            <SubLine $fs={11} $ls={1.5}>GL±0</SubLine>
            <SubLine $fs={11} $ls={1.5}>GL+100</SubLine>
          </Cell>
          {emptyCols(16)}
        </SheetRow>
        <SheetRow $h={33}>
          <Cell />
          <Cell $align="left" $pl={14}>エントランス</Cell>
          <Cell $fs={11} $ls={1.5}>・±0</Cell>
          {emptyCols(16)}
        </SheetRow>
        <SheetRow $h={33}>
          <Cell />
          <Cell $align="left" $pl={14}>ポンプ室</Cell>
          <Cell $fs={11} $ls={1.5}>GL±0</Cell>
          {emptyCols(16)}
        </SheetRow>
        <SheetRow $h={33}>
          <Cell />
          <Cell />
          {emptyCols(17)}
        </SheetRow>
        <SheetRow $h={33}>
          <Cell />
          <Cell />
          {emptyCols(17)}
        </SheetRow>
        <SheetRow $h={33}>
          <Cell $ls={1}>2 ~ 4</Cell>
          <Cell $align="left" $pl={16}>Ａ，Ｂタイプ共通</Cell>
          {emptyCols(17)}
        </SheetRow>
      </tbody>
    </Sheet>
  );
}

function StatusBar() {
  return (
    <BarRow $h={17} $top>
      <BarCell $w={203} />
      <BarCell $w={28} $justify="center"><InfoDot>i</InfoDot></BarCell>
      <BarCell $w={37} $pl={3}>A2横</BarCell>
      <BarCell $w={57} $pl={5}>1:1</BarCell>
      <BarCell $w={56} $pl={5}>1:1</BarCell>
      <BarCell $w={226} $pl={9}>x:-120.625, y:165.726</BarCell>
      <BarCell $w={19} $pl={8}>*</BarCell>
      <BarCell $w={31} $pl={3}>L:40</BarCell>
      <BarCell $w={13} $pl={3}>*</BarCell>
      <ColorBox $w={37} $bg="#808080" $mr={2} />
      <ColorBox $w={52} $bg="#fff"><FullLine /></ColorBox>
      <BarCell $w={39} $pl={5}>1:0.01</BarCell>
      <BarCell $w={52} $pl={4}>G:1</BarCell>
      <BarCell $w={41} $pl={4}>M:0</BarCell>
      <BarCell $w={14} $pl={4}>*</BarCell>
      <WhiteChip>なし</WhiteChip>
      <BarCell $w={22} $pl={3}><Icon name="snapNear" size={15} /></BarCell>
      <BarCell $w={21} $pl={2}><Icon name="trim" size={15} /></BarCell>
      <BarCell $w={47} $pl={5}>2191</BarCell>
    </BarRow>
  );
}

function CommandBar() {
  return (
    <BarRow $h={18} $top>
      <BarCell $w={580} $pl={5}>ｺﾏﾝﾄﾞを入力してください</BarCell>
      <BarCell $w={206} $pl={2}>修正アシスト</BarCell>
      <BarCell $w={43} $pl={3}>ﾚｲﾔ小</BarCell>
      <BarCell $w={29} />
      <BarCell $w={25} />
      <BarCell $w={55} $pl={5}>表示設定</BarCell>
      <BarCell $w={31} $pl={3}>電卓</BarCell>
      <BarCell $w={29} $pl={2} $c="#9a9aaa">CAP</BarCell>
      <BarCell $w={30} $pl={2}>NUM</BarCell>
    </BarRow>
  );
}

export default function App() {
  return (
    <Screen>
      <GlobalStyle />
      <Logo />
      <TitleBar>
        <QuickBar>
          {QUICK.map((name) => <Icon key={name} name={name} />)}
        </QuickBar>
        <QuickArrow />
        <WindowTitle>DRA-CAD16 - [MAS-D-02 仕上表.mps]</WindowTitle>
        <WinGlyph $w={24}><MinBar /></WinGlyph>
        <WinGlyph $w={24}><MaxBox /></WinGlyph>
        <WinClose>×</WinClose>
      </TitleBar>

      <Shell>
        <TabStrip>
          <RibbonTab $active>ホーム</RibbonTab>
          {TABS.map((tab) => <RibbonTab key={tab}>{tab}</RibbonTab>)}
          <PaletteMenu>パレット<Arrow /></PaletteMenu>
          <TabSearch />
          <CornerGroup>
            <Icon name="search" size={15} />
            <Arrow />
            <MinBar $c="#667" $top={7} />
            <MaxBox />
            <span>✕</span>
          </CornerGroup>
        </TabStrip>

        <RibbonPanel>
          <Group $w={190}>
            <GroupBody>
              <BigButton w={48} icon="line" label="単線" />
              <BigButton w={34} icon="box" label="ﾎﾞｯｸｽ" fs={14} />
              <BigButton w={50} icon="move" label="移動" />
              <BigButton w={48} icon="parallel" label="平行複写" />
            </GroupBody>
            <GroupFoot>作図</GroupFoot>
          </Group>

          <Group $w={454}>
            <GroupBody>
              <BigButton w={60} icon="attr" label="属性変更" />
              <BigButton w={56} icon="property" label="ﾌﾟﾛﾊﾟﾃｨ" fs={14} />
              <AttrGrid $ml={4}>
                <AttrRow><KeyButton>L</KeyButton><Select w={79}>040:</Select></AttrRow>
                <AttrRow><KeyButton>T</KeyButton><Select w={79}>001:<LineSample /></Select></AttrRow>
                <AttrRow><KeyButton>G</KeyButton><Field $w={79} $disabled>1</Field></AttrRow>
              </AttrGrid>
              <AttrGrid $ml={9}>
                <AttrRow><KeyButton>C</KeyButton><Select w={79}>015:<Swatch $w={31} $c="#808080" $ml={3} /></Select></AttrRow>
                <AttrRow><KeyButton>W</KeyButton><Select w={79}>001: 0.01</Select></AttrRow>
                <AttrRow><KeyButton>M</KeyButton><Select w={79}>000:</Select></AttrRow>
              </AttrGrid>
              <AttrGrid $ml={8}>
                <AttrRow><KeyButton $fs={14}>Fc</KeyButton><Select w={79}>None<Swatch $w={31} $c="#fff" /></Select></AttrRow>
                <AttrRow>
                  <Alpha>透明度<AlphaUnit>(%)</AlphaUnit><AlphaValue>0</AlphaValue></Alpha>
                </AttrRow>
                <AttrRow>
                  <Alpha><RibbonCheck />境界線非表示</Alpha>
                </AttrRow>
              </AttrGrid>
            </GroupBody>
            <GroupFoot data-launcher="">属性</GroupFoot>
          </Group>

          <Group $w={247}>
            <GroupBody>
              <BigButton w={62} icon="direct" label="直接文字" />
              <AttrGrid $ml={1}>
                <AttrRow>
                  <KeyButton>S</KeyButton>
                  <Select w={99} fs={12.5}>個別設定</Select>
                  <KeyButton $ml={7} $fs={14}>B</KeyButton>
                  <KeyButton $fs={14}>I</KeyButton>
                </AttrRow>
                <AttrRow>
                  <KeyButton>F</KeyButton>
                  <Select w={99} fs={12.5}>ＭＳ ゴシック</Select>
                  <KeyButton $ml={7} $fs={14} $deco="underline">U</KeyButton>
                  <KeyButton $fs={12} $deco="line-through">abc</KeyButton>
                </AttrRow>
                <AttrRow>
                  <KeyButton $fs={15}>F↕</KeyButton>
                  <Field $w={34} $disabled>120</Field>
                  <KeyButton $deco="underline">F</KeyButton>
                  <Field $w={35} $disabled>100</Field>
                  <KeyButton $fs={11} $deco="underline">a b</KeyButton>
                  <Field $w={34} $disabled>0</Field>
                </AttrRow>
              </AttrGrid>
            </GroupBody>
            <GroupFoot data-launcher="">文字</GroupFoot>
          </Group>

          <Group $w={91}>
            <GroupBody>
              <BigButton w={48} icon="copy" label="ｺﾋﾟｰ" fs={14} />
              <BigButton w={37} icon="paste" label="貼付け" />
            </GroupBody>
            <GroupFoot $fs={14}>ｸﾘｯﾌﾟﾎﾞｰﾄﾞ</GroupFoot>
          </Group>
        </RibbonPanel>

        <Workspace>
          <Dock $w={23} $pad="5px 0 0 1px">
            <DockTab $h={82} $open>
              <Icon name="palLoupe" />
              <DockText>ルーペ</DockText>
            </DockTab>
            <DockTab $h={22}><Icon name="palWin" /></DockTab>
          </Dock>

          <DocColumn>
            <DocTabs>
              <DocTab>
                <Icon name="doc" />
                <span>MAS-D-02 仕上表.mps</span>
                <DocClose>×</DocClose>
              </DocTab>
            </DocTabs>
            <Canvas>
              <DrawingSheet />
            </Canvas>
            <StatusBar />
            <CommandBar />
          </DocColumn>

          <Dock $w={23} $pad="5px 0 0 3px" $gap={1}>
            <DockTab $h={21}><Icon name="palDoc" /></DockTab>
            <DockTab $h={21}><Icon name="palLines" /></DockTab>
            <DockTab $h={21}><Icon name="palShape" /></DockTab>
            <DockTab $h={21}><Icon name="palF" /></DockTab>
            <DockTab $h={80} $open>
              <Icon name="palParts" />
              <DockText>パーツ</DockText>
            </DockTab>
            <DockTab $h={21}><Icon name="palCopy" /></DockTab>
            <DockTab $h={99} $mt={14} $open>
              <Icon name="palAttr" />
              <DockText $fs={11}>属性リスト</DockText>
            </DockTab>
          </Dock>
        </Workspace>

        <ToolRows>
          <ToolRow $gap={1}>
            <Toolbar $w={360}>
              <Grip />
              {BAR_ONE.map((name, i) => (
                <ToolButton key={name} $active={i === 1}><Icon name={name} /></ToolButton>
              ))}
            </Toolbar>
            <Toolbar $w={260}>
              <Grip />
              <ToolButton><Icon name="spadeGear" /></ToolButton>
              <ToolButton $active><Icon name="star" /></ToolButton>
              <ToolButton><Icon name="lp" /></ToolButton>
              <ToolSep />
              <ToolButton><ToolText>.x</ToolText></ToolButton>
              <ToolButton><ToolText>.y</ToolText></ToolButton>
              <ToolButton><ToolText $c="#a8a8ac">.z</ToolText></ToolButton>
              <ToolButton><ToolText $c="#a8a8ac">xy</ToolText></ToolButton>
              <ToolButton><ToolText $c="#a8a8ac">yz</ToolText></ToolButton>
              <ToolButton><ToolText $c="#a8a8ac">zx</ToolText></ToolButton>
              <ToolSep />
              <ToolButton><Icon name="plusGray" /></ToolButton>
            </Toolbar>
            <Toolbar $w={449}>
              <Grip />
              {BAR_THREE.map((name, i) => (
                <ToolButton key={name} $active={i === 0}><Icon name={name} /></ToolButton>
              ))}
              <ToolSep />
              <ToolButton><Icon name="andCloud" /></ToolButton>
              <ToolButton><Icon name="cloudArrow" /></ToolButton>
              <ToolButton><Icon name="grayPaint" /></ToolButton>
              <ToolDrop><Arrow $c="#8a8a90" /></ToolDrop>
              <ToolSep />
              <ToolButton><Icon name="grayCloud" /></ToolButton>
              <ToolButton><Icon name="grayBox" /></ToolButton>
            </Toolbar>
          </ToolRow>
          <ToolRow>
            <Toolbar $w={476}>
              <Grip />
              {BAR_ROW_TWO.map((name) => (
                <ToolButton key={name}><Icon name={name} /></ToolButton>
              ))}
            </Toolbar>
          </ToolRow>
        </ToolRows>
      </Shell>

      <AssistDialog />
    </Screen>
  );
}
